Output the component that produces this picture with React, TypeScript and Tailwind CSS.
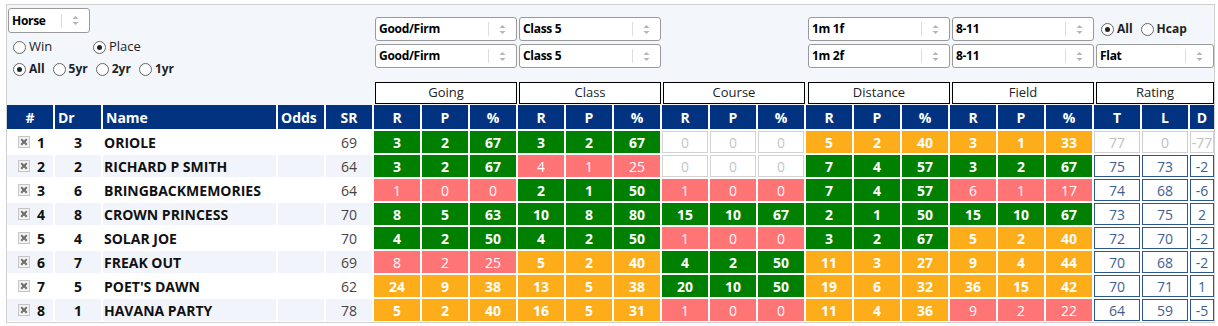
import React from "react";

type C = "G" | "O" | "R" | "Z";
type Grp = [number, number, number, C];
interface Row {
  n: number;
  dr: number;
  name: string;
  sr: number;
  groups: Grp[];
  rating: [string, string, string];
  dim?: boolean;
}

const rows: Row[] = [
  { n: 1, dr: 3, name: "ORIOLE", sr: 69, groups: [[3, 2, 67, "G"], [3, 2, 67, "G"], [0, 0, 0, "Z"], [5, 2, 40, "O"], [3, 1, 33, "O"]], rating: ["77", "0", "-77"], dim: true },
  { n: 2, dr: 2, name: "RICHARD P SMITH", sr: 64, groups: [[3, 2, 67, "G"], [4, 1, 25, "R"], [0, 0, 0, "Z"], [7, 4, 57, "G"], [3, 2, 67, "G"]], rating: ["75", "73", "-2"] },
  { n: 3, dr: 6, name: "BRINGBACKMEMORIES", sr: 64, groups: [[1, 0, 0, "R"], [2, 1, 50, "G"], [1, 0, 0, "R"], [7, 4, 57, "G"], [6, 1, 17, "R"]], rating: ["74", "68", "-6"] },
  { n: 4, dr: 8, name: "CROWN PRINCESS", sr: 70, groups: [[8, 5, 63, "G"], [10, 8, 80, "G"], [15, 10, 67, "G"], [2, 1, 50, "G"], [15, 10, 67, "G"]], rating: ["73", "75", "2"] },
  { n: 5, dr: 4, name: "SOLAR JOE", sr: 70, groups: [[4, 2, 50, "G"], [4, 2, 50, "G"], [1, 0, 0, "R"], [3, 2, 67, "G"], [5, 2, 40, "O"]], rating: ["72", "70", "-2"] },
  { n: 6, dr: 7, name: "FREAK OUT", sr: 69, groups: [[8, 2, 25, "R"], [5, 2, 40, "O"], [4, 2, 50, "G"], [11, 3, 27, "O"], [9, 4, 44, "O"]], rating: ["70", "68", "-2"] },
  { n: 7, dr: 5, name: "POET'S DAWN", sr: 62, groups: [[24, 9, 38, "O"], [13, 5, 38, "O"], [20, 10, 50, "G"], [19, 6, 32, "O"], [36, 15, 42, "O"]], rating: ["70", "71", "1"] },
  { n: 8, dr: 1, name: "HAVANA PARTY", sr: 78, groups: [[5, 2, 40, "O"], [16, 5, 31, "O"], [1, 0, 0, "R"], [11, 4, 36, "O"], [9, 2, 22, "R"]], rating: ["64", "59", "-5"] },
];

const cellCls: Record<C, string> = {
  G: "bg-[#008000] text-white font-bold",
  O: "bg-[#fdac1a] text-white font-bold",
  R: "bg-[#ff7474] text-white font-normal",
  Z: "bg-white border border-[#d2d2d2] text-[#c8c8c8] font-normal",
};

const GRID =
  "grid grid-cols-[46px_46px_173px_46px_46px_repeat(15,46px)_46px_46px_24px] gap-x-[2px]";

function Arrows() {
  return (
    <svg width="7" height="11" viewBox="0 0 7 11">
      <path d="M3.5 1 L6.5 4 L0.5 4 Z" fill="#b5b5b5" />
      <path d="M3.5 10 L6.5 7 L0.5 7 Z" fill="#b5b5b5" />
    </svg>
  );
}

function Select({ label, className = "" }: { label: string; className?: string }) {
  return (
    <div
      className={`flex h-[24px] items-center rounded-[3px] border border-[#9a9a9a] bg-white ${className}`}
    >
      <span className="flex-1 whitespace-nowrap pl-[3px] text-[12px] font-bold leading-[18px] tracking-[-0.3px] text-black">
        {label}
      </span>
      <span className="h-[14px] w-px bg-[#dcdcdc]" />
      <span className="flex w-[27px] items-center justify-center">
        <Arrows />
      </span>
    </div>
  );
}

function Radio({ checked }: { checked?: boolean }) {
  return (
    <span className="flex h-[13px] w-[13px] shrink-0 items-center justify-center rounded-full border border-[#666] bg-white">
      {checked && <span className="h-[5px] w-[5px] rounded-full bg-[#222]" />}
    </span>
  );
}

function CheckX() {
  return (
    <span className="flex h-[12px] w-[12px] items-center justify-center border border-[#c4c4c4] bg-[#f2f2f2]">
      <svg width="8" height="8" viewBox="0 0 8 8">
        <path d="M1.2 1.2 L6.8 6.8 M6.8 1.2 L1.2 6.8" stroke="#6e6e6e" strokeWidth="2" />
      </svg>
    </span>
  );
}

export default function App() {
  return (
    <div
      className="min-h-[326px] bg-white pt-[4px]"
      style={{ fontFamily: '"Open Sans", "Noto Sans", sans-serif' }}
    >
      <div className="ml-[6px] w-[1209px] border border-[#d0d0d0] bg-[#f3f6fb]">
        {/* top controls */}
        <div className={`${GRID} h-[77px]`}>
          <div className="col-span-5 flex flex-col pl-[1px] pt-[3px]">
            <Select label="Horse" className="h-[25px] w-[82px]" />
            <div className="mt-[7px] flex h-[14px] items-center pl-[5px] text-[13px] text-[#222]">
              <div className="flex w-[80px] items-center gap-[3px]">
                <Radio />
                <span>Win</span>
              </div>
              <div className="flex items-center gap-[3px]">
                <Radio checked />
                <span>Place</span>
              </div>
            </div>
            <div className="mt-[8px] flex h-[14px] items-center gap-[8px] pl-[5px] text-[12px] font-bold text-[#222]">
              <div className="flex items-center gap-[3px]">
                <Radio checked />
                <span>All</span>
              </div>
              <div className="flex items-center gap-[3px]">
                <Radio />
                <span>5yr</span>
              </div>
              <div className="flex items-center gap-[3px]">
                <Radio />
                <span>2yr</span>
              </div>
              <div className="flex items-center gap-[3px]">
                <Radio />
                <span>1yr</span>
              </div>
            </div>
          </div>
          <div className="col-span-3 flex flex-col gap-[3px] pt-[12px]">
            <Select label="Good/Firm" className="ml-[1px] w-[142px]" />
            <Select label="Good/Firm" className="ml-[1px] w-[142px]" />
          </div>
          <div className="col-span-3 flex flex-col gap-[3px] pt-[12px]">
            <Select label="Class 5" className="ml-[1px] w-[142px]" />
            <Select label="Class 5" className="ml-[1px] w-[142px]" />
          </div>
          <div className="col-span-3" />
          <div className="col-span-3 flex flex-col gap-[3px] pt-[12px]">
            <Select label="1m 1f" className="ml-[2px] w-[142px]" />
            <Select label="1m 2f" className="ml-[2px] w-[142px]" />
          </div>
          <div className="col-span-3 flex flex-col gap-[3px] pt-[12px]">
            <Select label="8-11" className="ml-[2px] w-[142px]" />
            <Select label="8-11" className="ml-[2px] w-[142px]" />
          </div>
          <div className="col-span-3 flex flex-col gap-[3px] pt-[12px]">
            <div className="flex h-[24px] items-center gap-[8px] pl-[7px] text-[12px] font-bold text-[#222]">
              <div className="flex items-center gap-[3px]">
                <Radio checked />
                <span>All</span>
              </div>
              <div className="flex items-center gap-[3px]">
                <Radio />
                <span>Hcap</span>
              </div>
            </div>
            <Select label="Flat" className="ml-[2px] w-[118px]" />
          </div>
        </div>

        {/* group headers */}
        <div className={`${GRID} mb-[1px] h-[22px]`}>
          <div className="col-span-5" />
          {["Going", "Class", "Course", "Distance", "Field"].map((g, i) => (
            <div
              key={g}
              className={`col-span-3 flex h-[22px] w-[142px] items-center justify-center border border-black bg-white text-[13px] text-[#222] ${
                i < 3 ? "ml-[1px]" : "ml-[2px]"
              }`}
            >
              {g}
            </div>
          ))}
          <div className="col-span-3 ml-[2px] flex h-[22px] w-[118px] items-center justify-center border border-black bg-white text-[13px] text-[#222]">
            Rating
          </div>
        </div>

        {/* table */}
        <div className={`${GRID} gap-y-[2px] bg-white pb-[1px]`}>
          {[
            ["#", "justify-center"],
            ["Dr", "pl-[3px]"],
            ["Name", "pl-[3px]"],
            ["Odds", "pl-[3px]"],
            ["SR", "justify-center"],
          ].map(([t, c]) => (
            <div
              key={t}
              className={`flex h-[24px] items-center bg-[#013380] text-[14px] font-bold text-white ${c}`}
            >
              {t}
            </div>
          ))}
          {Array.from({ length: 5 }).flatMap((_, g) =>
            ["R", "P", "%"].map((t) => (
              <div
                key={`h${g}${t}`}
                className="flex h-[24px] items-center justify-center bg-[#013380] text-[14px] font-bold text-white"
              >
                {t}
              </div>
            ))
          )}
          {["T", "L", "D"].map((t) => (
            <div
              key={`r${t}`}
              className="flex h-[24px] items-center justify-center bg-[#013380] text-[14px] font-bold text-white"
            >
              {t}
            </div>
          ))}

          {rows.map((r, i) => {
            const bg = i % 2 === 1 ? "bg-[#f1f5fb]" : "bg-white";
            return (
              <React.Fragment key={r.n}>
                <div className={`flex h-[22px] items-center gap-[7px] pl-[11px] text-[14px] font-bold text-[#111] ${bg}`}>
                  <CheckX />
                  <span>{r.n}</span>
                </div>
                <div className={`flex h-[22px] items-center justify-center text-[14px] font-bold text-[#111] ${bg}`}>
                  {r.dr}
                </div>
                <div className={`flex h-[22px] items-center pl-[1px] text-[14px] font-bold text-[#111] ${bg}`}>
                  {r.name}
                </div>
                <div className={`h-[22px] ${bg}`} />
                <div className={`flex h-[22px] items-center justify-center text-[14px] text-[#444] ${bg}`}>
                  {r.sr}
                </div>
                {r.groups.flatMap((g, gi) =>
                  [g[0], g[1], g[2]].map((v, vi) => (
                    <div
                      key={`${gi}-${vi}`}
                      className={`flex h-[22px] items-center justify-center text-[14px] ${cellCls[g[3]]}`}
                    >
                      {v}
                    </div>
                  ))
                )}
                {r.rating.map((v, vi) => (
                  <div
                    key={`rt${vi}`}
                    className={`flex h-[22px] items-center justify-center overflow-hidden border bg-white text-[14px] ${
                      r.dim ? "border-[#d0d0d0] text-[#c0c0c0]" : "border-[#2b5793] text-[#3d5f91]"
                    }`}
                  >
                    {v}
                  </div>
                ))}
              </React.Fragment>
            );
          })}
        </div>
      </div>
    </div>
  );
}
